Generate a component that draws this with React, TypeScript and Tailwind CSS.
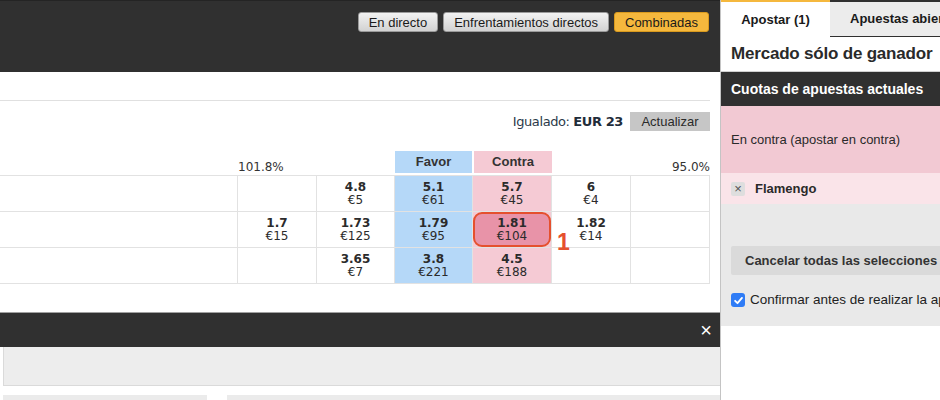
import React from "react";

type Cell = { o?: string; s?: string; kind?: "back" | "lay" | "sel" };

const rows: Cell[][] = [
  [{}, { o: "4.8", s: "€5" }, { o: "5.1", s: "€61", kind: "back" }, { o: "5.7", s: "€45", kind: "lay" }, { o: "6", s: "€4" }, {}],
  [{ o: "1.7", s: "€15" }, { o: "1.73", s: "€125" }, { o: "1.79", s: "€95", kind: "back" }, { o: "1.81", s: "€104", kind: "sel" }, { o: "1.82", s: "€14" }, {}],
  [{}, { o: "3.65", s: "€7" }, { o: "3.8", s: "€221", kind: "back" }, { o: "4.5", s: "€188", kind: "lay" }, {}, {}],
];

const widths = ["w-[79px]", "w-[78px]", "w-[78px]", "w-[79px]", "w-[79px]", "w-[79px]"];

function OddsCell({ c, w }: { c: Cell; w: string }) {
  const bg =
    c.kind === "back"
      ? "bg-[#b5d8f8]"
      : c.kind === "lay" || c.kind === "sel"
      ? "bg-[#f5cad4]"
      : "bg-white";
  return (
    <div className={`${w} h-[36px] shrink-0 border-r border-b border-[#e2e2e2] ${bg} relative flex items-center justify-center`}>
      {c.kind === "sel" && (
        <div className="absolute left-[0px] top-[0px] w-[78px] h-[35px] bg-[#e893a8] rounded-[9px] border-2 border-[#e5502e]" />
      )}
      {c.o && (
        <div className="relative flex flex-col items-center text-[#2b2b2b] leading-[13px] [font-family:'DejaVu_Sans',sans-serif]">
          <span className="text-[12px] font-bold">{c.o}</span>
          <span className="text-[12px]">{c.s}</span>
        </div>
      )}
      {c.kind === "sel" && (
        <span className="absolute left-[84px] top-[19px] text-[23px] font-bold text-[#e5502e] leading-none [font-family:'Liberation_Sans',Arial,sans-serif] z-10">
          1
        </span>
      )}
    </div>
  );
}

export default function App() {
  return (
    <div className="w-[940px] h-[400px] overflow-hidden flex bg-white [font-family:'Liberation_Sans',Arial,sans-serif]">
      {/* Main */}
      <div className="w-[720px] shrink-0">
        <div className="h-[72px] bg-[#303030] border-t border-[#242424] flex justify-end items-start pt-[11px] pr-[11px] gap-[5px]">
          <button className="h-[20px] px-[10px] rounded-[3px] bg-gradient-to-b from-[#f2f2f2] to-[#d2d2d2] border border-[#9a9a9a] text-[13px] text-[#1a1a1a] leading-none">
            En directo
          </button>
          <button className="h-[20px] px-[10px] rounded-[3px] bg-gradient-to-b from-[#f2f2f2] to-[#d2d2d2] border border-[#9a9a9a] text-[13px] text-[#1a1a1a] leading-none">
            Enfrentamientos directos
          </button>
          <button className="h-[20px] px-[10px] rounded-[3px] bg-[#f5b83d] border border-[#d99a1e] text-[13px] text-[#1a1a1a] leading-none">
            Combinadas
          </button>
        </div>
        <div className="h-[29px] mr-[10px] border-b border-[#e0e0e0]" />
        <div className="mt-[11px] mr-[10px] h-[19px] flex justify-end items-center gap-[7px]">
          <span className="text-[13px] text-[#2b3a4a] [font-family:'DejaVu_Sans',sans-serif] tracking-[-0.4px]">
            Igualado: <b className="text-[#1f2d3a]">EUR 23</b>
          </span>
          <button className="h-[19px] w-[80px] bg-[#c6c6c6] text-[13px] text-[#2a2a2a] leading-none">Actualizar</button>
        </div>
        {/* header row */}
        <div className="mt-[20px] h-[24px] flex w-[710px]">
          <div className="w-[238px] shrink-0" />
          <div className="w-[79px] shrink-0 text-[12px] text-[#333] pt-[7px] [font-family:'DejaVu_Sans',sans-serif]">101.8%</div>
          <div className="w-[78px] shrink-0" />
          <div className="w-[77px] shrink-0 h-[22px] bg-[#b5d8f8] flex items-center justify-center text-[13px] font-bold text-[#333]">Favor</div>
          <div className="w-[2px] shrink-0" />
          <div className="w-[78px] shrink-0 h-[22px] bg-[#f5cad4] flex items-center justify-center text-[13px] font-bold text-[#333]">Contra</div>
          <div className="flex-1 text-right text-[12px] text-[#333] pt-[7px] [font-family:'DejaVu_Sans',sans-serif]">95.0%</div>
        </div>
        {/* table */}
        <div className="w-[710px] border-t border-[#e2e2e2]">
          {rows.map((r, ri) => (
            <div key={ri} className="flex">
              <div className="w-[238px] h-[36px] shrink-0 border-r border-b border-[#e2e2e2]" />
              {r.map((c, ci) => (
                <OddsCell key={ci} c={c} w={widths[ci]} />
              ))}
            </div>
          ))}
        </div>
        <div className="h-[28px]" />
        <div className="h-[35px] bg-[#303030] border-t border-[#a0a0a0] flex items-center justify-end pr-[8px]">
          <span className="text-white text-[20px] leading-none">×</span>
        </div>
        <div className="ml-[3px] h-[39px] bg-[#ededed] border-l border-b border-[#dadada]" />
        <div className="h-[9px]" />
        <div className="flex gap-[20px] ml-[3px]">
          <div className="w-[204px] h-[20px] bg-[#ebebeb]" />
          <div className="flex-1 h-[20px] bg-[#ebebeb]" />
        </div>
      </div>

      {/* Bet slip */}
      <div className="w-[220px] shrink-0 border-l border-[#c4c4c4] overflow-hidden">
        <div className="h-[37px] bg-[#303030] flex">
          <div className="w-[109px] shrink-0 bg-white border-t-2 border-[#f5b83d] flex items-center justify-center text-[13px] font-bold text-[#1a1a1a]">
            Apostar (1)
          </div>
          <div className="w-[160px] shrink-0 mt-[2px] h-[34px] bg-[#ececec] flex items-center pl-[20px] text-[13px] font-bold text-[#1a1a1a] whitespace-nowrap">
            Apuestas abiertas
          </div>
        </div>
        <div className="h-[35px] bg-white flex items-center pl-[10px] text-[17px] font-bold text-[#2a2a2a] whitespace-nowrap border-b border-[#d0d0d0] tracking-[-0.2px]">
          Mercado sólo de ganador
        </div>
        <div className="h-[34px] bg-[#303030] flex items-center pl-[10px] text-[14px] font-bold text-white whitespace-nowrap">
          Cuotas de apuestas actuales
        </div>
        <div className="h-[67px] bg-[#f2c9d3] flex items-center pl-[10px] text-[13px] text-[#2a2a2a] whitespace-nowrap">
          En contra (apostar en contra)
        </div>
        <div className="h-[31px] bg-[#fae4e9] flex items-center pl-[10px] gap-[10px] whitespace-nowrap">
          <span className="w-[14px] h-[14px] rounded-[2px] bg-[#dedede] flex items-center justify-center text-[13px] text-[#555] leading-none">×</span>
          <span className="text-[13px] font-bold text-[#2a2a2a]">Flamengo</span>
        </div>
        <div className="h-[122px] bg-[#e9e9e9] pl-[10px] pt-[42px]">
          <div className="w-[260px] h-[29px] bg-[#dadada] rounded-[2px] flex items-center pl-[14px] text-[13px] font-bold text-[#333] whitespace-nowrap">
            Cancelar todas las selecciones
          </div>
          <div className="mt-[15px] flex items-center gap-[5px] whitespace-nowrap">
            <span className="w-[14px] h-[14px] rounded-[3px] bg-[#2f7cf6] flex items-center justify-center shrink-0">
              <svg width="11" height="11" viewBox="0 0 12 12">
                <path d="M2.3 6.3 L4.9 8.9 L9.8 3.2" stroke="white" strokeWidth="2" fill="none" strokeLinecap="round" strokeLinejoin="round" />
              </svg>
            </span>
            <span className="text-[13.5px] text-[#222]">Confirmar antes de realizar la apuesta</span>
          </div>
        </div>
      </div>
    </div>
  );
}
